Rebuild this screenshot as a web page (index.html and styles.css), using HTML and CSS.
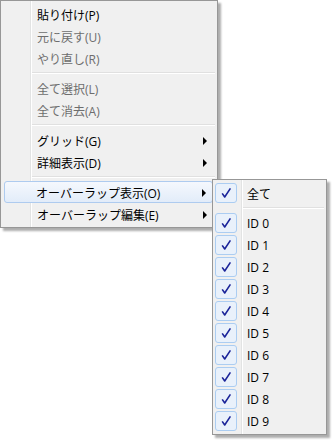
FILE: index.html
```html
<!DOCTYPE html>
<html lang="ja">
<head>
  <meta charset="UTF-8" />
  <title>コンテキストメニュー</title>
  <link rel="stylesheet" href="styles.css">
</head>
<body>
  <div class="desk">
    <div class="menu main">
      <div class="item">貼り付け(P)</div>
      <div class="item off">元に戻す(U)</div>
      <div class="item off">やり直し(R)</div>
      <div class="sep"></div>
      <div class="item off">全て選択(L)</div>
      <div class="item off">全て消去(A)</div>
      <div class="sep"></div>
      <div class="item">グリッド(G)<span class="arrow"></span></div>
      <div class="item">詳細表示(D)<span class="arrow"></span></div>
      <div class="sep"></div>
      <div class="item hot">オーバーラップ表示(O)<span class="arrow"></span></div>
      <div class="item">オーバーラップ編集(E)<span class="arrow"></span></div>
    </div>

    <div class="menu sub" id="overlap"></div>
  </div>

  <script>
    const sub = document.getElementById("overlap");
    const names = ["全て", "-", "ID 0", "ID 1", "ID 2", "ID 3", "ID 4", "ID 5", "ID 6", "ID 7", "ID 8", "ID 9"];
    const tick = '<svg width="12" height="12" viewBox="0 0 12 12"><path d="M2.2 6.4 L4.7 10 L10.4 1.4" fill="none" stroke="#1b2499" stroke-width="1.6" stroke-linejoin="round"/></svg>';

    for (const name of names) {
      const row = document.createElement("div");
      if (name === "-") {
        row.className = "sep";
      } else {
        row.className = "item check";
        row.innerHTML = `<span class="box">${tick}</span><span class="label">${name}</span>`;
      }
      sub.appendChild(row);
    }
  </script>
</body>
</html>
```

FILE: styles.css
```css
body {
  margin: 0;
  background: #fff;
  font-family: "Open Sans", "Noto Sans CJK JP", sans-serif;
  font-size: 12px;
  color: #000;
}
.desk {
  position: relative;
  width: 332px;
  height: 440px;
}
.menu {
  border: 1px solid #979797;
  padding: 2px;
  background: #f0f0f0;
  box-shadow: 3px 3px 2px rgba(0,0,0,0.32);
  box-sizing: border-box;
}
.main {
  width: 218px;
  background: linear-gradient(to right, #f0f0f0 29px, #e2e3e3 29px, #e2e3e3 30px, #fff 30px, #fff 31px, #f0f0f0 31px);
}
.sub {
  position: absolute;
  left: 212px;
  top: 179px;
  width: 115px;
  background: linear-gradient(to right, #f0f0f0 28px, #e2e3e3 28px, #e2e3e3 29px, #fff 29px, #fff 30px, #f0f0f0 30px);
}
.item {
  height: 22px;
  display: flex;
  align-items: center;
  padding-left: 33px;
  padding-top: 1px;
  border: 1px solid transparent;
  border-radius: 3px;
  box-sizing: border-box;
  white-space: nowrap;
}
.item.off {
  color: #6d6d6d;
}
.item.hot {
  margin: 0 2px 0 1px;
  padding-left: 31px;
  border-color: #aecbef;
  background: linear-gradient(#f5f8fd, #e2ecf9);
}
.arrow {
  margin-left: auto;
  margin-right: 7px;
  width: 0;
  height: 0;
  border-left: 4px solid #000;
  border-top: 4px solid transparent;
  border-bottom: 4px solid transparent;
}
.item.hot .arrow {
  margin-right: 6px;
}
.sep {
  height: 8px;
  margin-left: 29px;
  display: flex;
  flex-direction: column;
  justify-content: center;
}
.sep::before {
  content: "";
  height: 1px;
  background: #e0e0e0;
  border-bottom: 1px solid #fff;
}
.sub .sep {
  margin-left: 28px;
}
.item.check {
  padding: 0;
  border: none;
}
.box {
  width: 22px;
  height: 20px;
  display: flex;
  align-items: center;
  justify-content: center;
  border: 1px solid #abcdf2;
  border-radius: 3px;
  background: #e9f1fb;
  box-sizing: border-box;
}
.label {
  margin-left: 10px;
  padding-top: 1px;
}
```
